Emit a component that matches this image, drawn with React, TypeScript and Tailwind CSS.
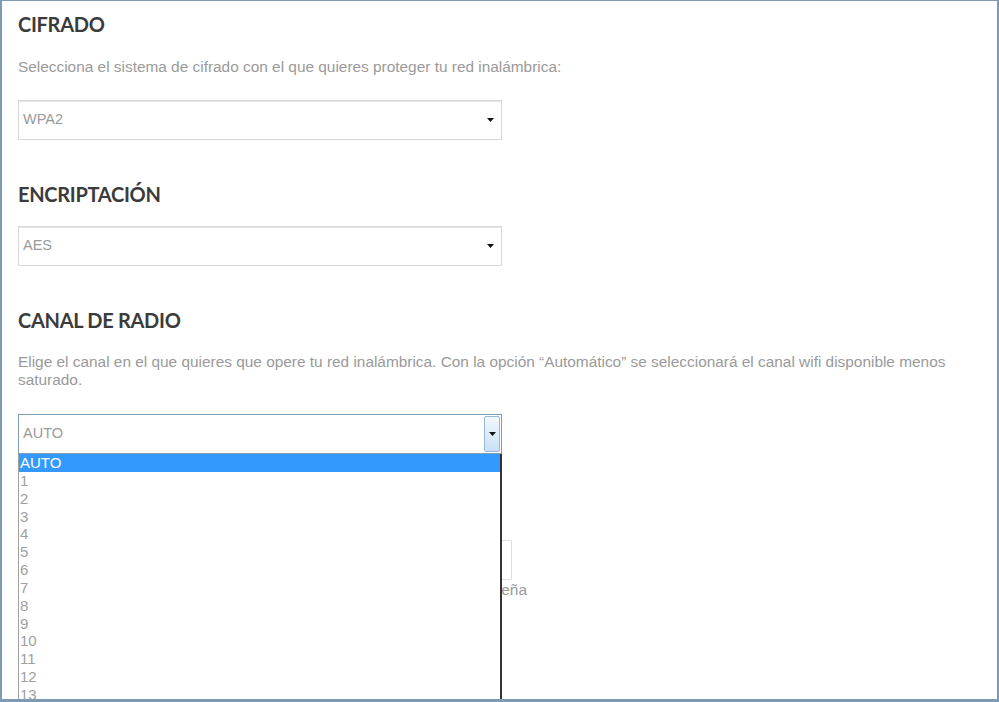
import React from "react";

const canales = ["1", "2", "3", "4", "5", "6", "7", "8", "9", "10", "11", "12", "13"];

function Flecha() {
  return (
    <svg width="7" height="4" viewBox="0 0 7 4" className="block">
      <path d="M0 0 L7 0 L3.5 4 Z" fill="#111" />
    </svg>
  );
}

function Selector({ valor }: { valor: string }) {
  return (
    <div className="flex h-10 w-[484px] items-center justify-between border border-[#d8d8d8] bg-white pl-[4px] pr-[7px] shadow-[inset_0_1px_0_#e4e4e4]">
      <span className="text-[14.5px] text-[#9a9a9a]">{valor}</span>
      <Flecha />
    </div>
  );
}

function Titulo({ children, className = "" }: { children: React.ReactNode; className?: string }) {
  return (
    <h2
      className={`h-6 text-[20px] font-bold leading-6 tracking-[-0.3px] text-[#3b3b3b] ${className}`}
      style={{ fontFamily: "Lato, 'Open Sans', sans-serif" }}
    >
      {children}
    </h2>
  );
}

export default function App() {
  return (
    <div
      className="h-[702px] w-[999px] overflow-hidden border-t border-r-2 border-b-[3px] border-l-2 border-[#7d9bb6] bg-white"
      style={{ fontFamily: "'Liberation Sans', Arial, sans-serif" }}
    >
      <div className="w-[950px] pl-[16px] pt-[11px]">
        {/* Cifrado */}
        <Titulo>CIFRADO</Titulo>
        <p className="mt-[22px] text-[15.4px] leading-[18px] text-[#9a9a9a]">
          Selecciona el sistema de cifrado con el que quieres proteger tu red inalámbrica:
        </p>
        <div className="mt-[24px]">
          <Selector valor="WPA2" />
        </div>

        {/* Encriptación */}
        <Titulo className="mt-[42px]">ENCRIPTACIÓN</Titulo>
        <div className="mt-[20px]">
          <Selector valor="AES" />
        </div>

        {/* Canal de radio */}
        <Titulo className="mt-[42px]">CANAL DE RADIO</Titulo>
        <p className="mt-[21px] text-[15.4px] leading-[18px] text-[#9a9a9a]">
          Elige el canal en el que quieres que opere tu red inalámbrica. Con la opción “Automático” se seleccionará el canal wifi disponible menos saturado.
        </p>

        <div className="relative mt-[25px]">
          <div className="flex h-10 w-[484px] items-center justify-between border border-[#7f9db9] bg-white pl-[4px]">
            <span className="text-[14.5px] text-[#9a9a9a]">AUTO</span>
            <div className="mr-[1px] flex h-[36px] w-[16px] items-center justify-center rounded-[2px] border border-[#98b8d8] bg-gradient-to-b from-[#f2f8fe] to-[#c8e0f6]">
              <Flecha />
            </div>
          </div>

          {/* Contraseña (tapada por la lista) */}
          <div className="pt-[43px]">
            <Titulo>CONTRASEÑA</Titulo>
            <div className="mt-[19px] h-10 w-[494px] border border-[#e0e0e0] bg-white" />
            <div className="mt-[1px] w-[509px] text-right text-[15.4px] leading-[18px] text-[#9a9a9a]">
              Introduce la contraseña
            </div>
          </div>

          {/* Lista desplegada */}
          <ul className="absolute left-0 top-10 z-10 h-[260px] w-[484px] overflow-hidden border-l border-r-2 border-l-[#a0a0a0] border-r-[#333] bg-white text-[15px]">
            <li className="h-[17.85px] bg-[#3399ff] pl-[1px] leading-[17.85px] text-white">AUTO</li>
            {canales.map((c) => (
              <li key={c} className="h-[17.85px] pl-[1px] leading-[17.85px] text-[#a0a0a0]">
                {c}
              </li>
            ))}
          </ul>
        </div>
      </div>
    </div>
  );
}
